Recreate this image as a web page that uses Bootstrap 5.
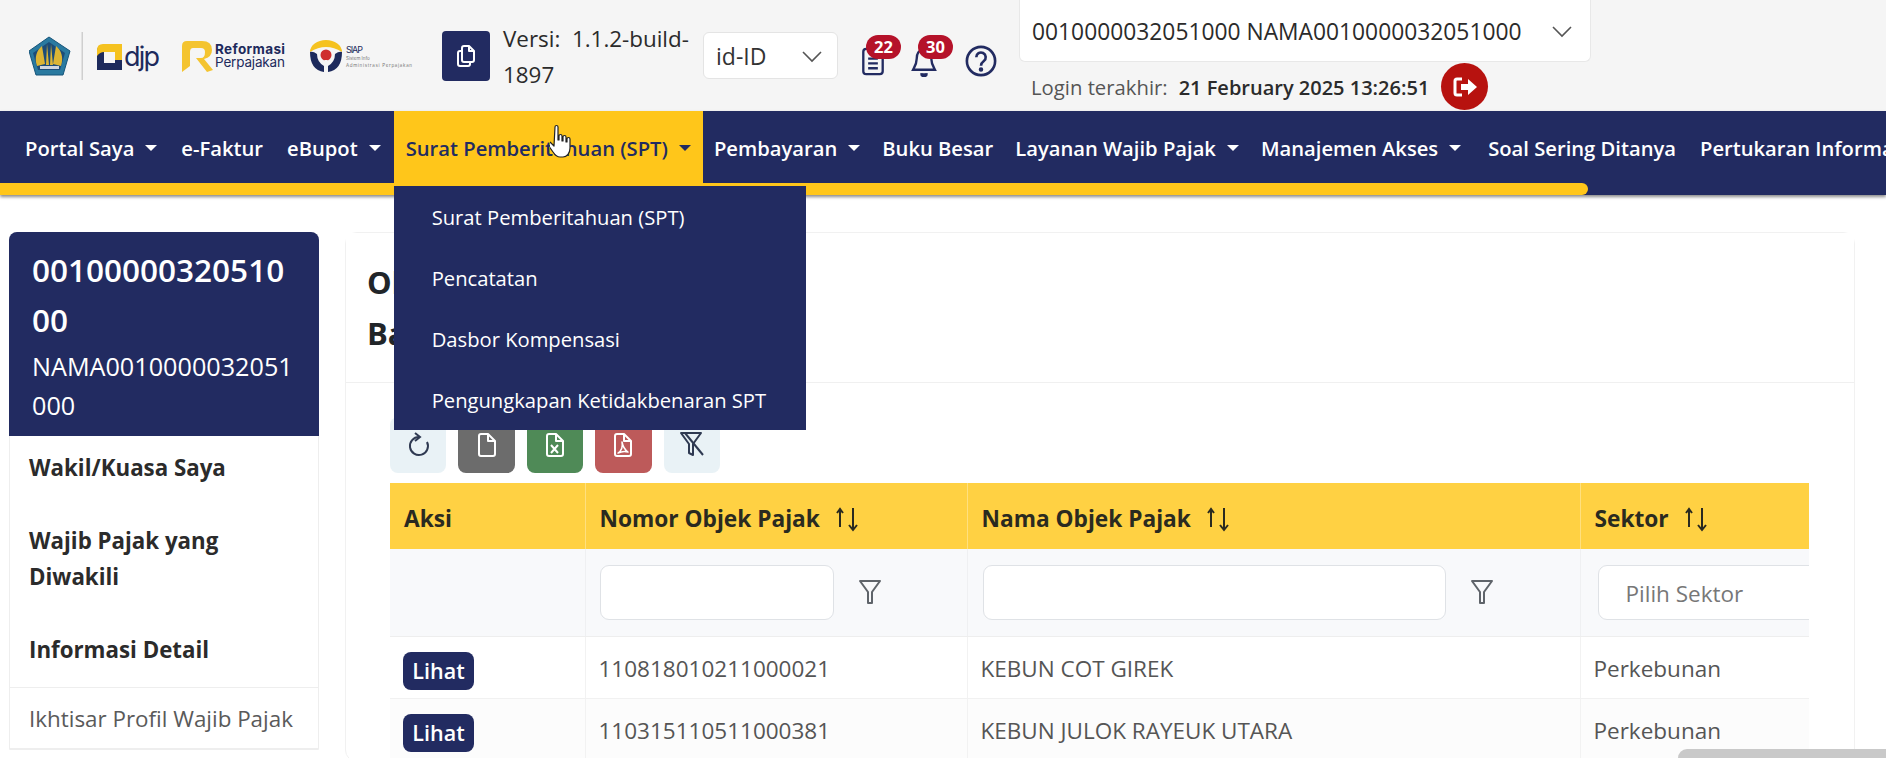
<!DOCTYPE html>
<html lang="id">
<head>
<meta charset="UTF-8" />
<meta name="viewport" content="width=device-width, initial-scale=1" />
<title>Objek Pajak</title>
<link href="https://cdn.jsdelivr.net/npm/bootstrap@5.3.0/dist/css/bootstrap.min.css" rel="stylesheet" />
<style>
html, body { height: 758px; overflow: hidden; }
body { font-family: "Open Sans", "Noto Sans", sans-serif; background: #fff; color: #212529; position: relative; }

/* top header */
.top-head { height: 111px; background: #f5f5f5; padding-left: 29px; }
.logo-strip { width: 413px; height: 111px; }
.logo-text { font-family: "Inter", "Liberation Sans", sans-serif; }
.copy-btn { width: 48px; height: 50px; background: #222b61; border-radius: 4px; margin-top: 31px; }
.versi-text { width: 197px; margin: 21px 0 0 13px; font-size: 22.4px; line-height: 36px; color: #2b2b2b; }
.lang-select { width: 135px; height: 47px; margin: 32px 0 0 3px; background: #fff; border: 1px solid #e4e4e4; border-radius: 6px; padding: 2px 14px 0 12px; font-size: 23px; color: #333; }
.icon-group { width: 181px; height: 111px; }
.ico-badge { position: absolute; height: 24px; border-radius: 12px; background: #b5122a; color: #fff; font-size: 16.5px; font-weight: 700; line-height: 24px; text-align: center; width: 35px; }
.acct-col { width: 572px; }
.acct-select { height: 62px; background: #fff; border: 1px solid #e8e8e8; border-top: 0; border-radius: 0 0 6px 6px; padding: 3px 17px 0 12px; font-size: 22.8px; color: #2b2b2b; }
.login-line { height: 48px; padding-left: 12px; font-size: 20.3px; color: #555; white-space: nowrap; }
.login-line span, .login-line b { padding-top: 3px; }
.login-line b { font-weight: 600; font-size: 20px; color: #2b2b2b; margin-left: 11px; }
.logout-btn { width: 47px; height: 47px; border-radius: 50%; background: #b7120f; margin: 1px 0 0 12px; position: relative; z-index: 3; }

/* main nav */
.main-nav { height: 84px; background: #222b61; box-shadow: 0 2px 3px #8a8a8a; position: relative; z-index: 2; }
.nav-row { height: 72px; padding-left: 13px; white-space: nowrap; overflow: visible; }
.menu-link { display: flex; align-items: center; height: 72px; padding: 2px 12px 0; color: #fff; font-size: 20.2px; font-weight: 600; text-decoration: none; }
.menu-tight { padding-left: 11px; padding-right: 11px; }
.menu-link.dropdown-toggle::after { border-top: 6px solid; border-left: 6px solid transparent; border-right: 6px solid transparent; border-bottom: 0; margin-left: 11px; }
.menu-slot { margin-left: 1px; }
.menu-soal { margin-left: 4px; }
.menu-link.menu-on { background: #ffc61a; color: #222b61; height: 75px; padding-bottom: 3px; align-self: flex-start; }
.scroll-ind { height: 12px; width: 1588px; background: #ffc61a; border-radius: 0 6px 6px 0; }
.spt-menu.dropdown-menu { position: absolute; top: 75px; left: 0; margin: 0; width: 412px; padding: 0; background: #222b61; border: 0; border-radius: 0; }
.spt-menu .dropdown-item { height: 61px; display: flex; align-items: center; padding: 2px 0 0 38px; color: #fff; font-size: 20.2px; }
.hand-cursor { position: absolute; left: 550px; top: 124px; z-index: 5; }

/* sidebar */
.page-body { padding-top: 37px; }
.side-col { width: 310px; margin-left: 9px; flex: none; }
.side-card { border: 1px solid #eee; border-radius: 8px 8px 0 0; }
.side-head { height: 204px; background: #222b61; color: #fff; padding: 13px 20px 0 23px; border-radius: 8px 8px 0 0; margin: -1px -1px 0; word-break: break-all; }
.side-npwp { font-size: 31.5px; font-weight: 600; line-height: 50px; }
.side-name { font-size: 25.2px; line-height: 39px; margin-top: 2px; }
.side-group { font-size: 22.3px; font-weight: 700; color: #2b2b2b; padding: 0 19px; line-height: 36px; }
.side-first { padding-top: 14px; }
.side-next { margin-top: 37px; }
.side-lastgroup { margin-bottom: 19px; }
.side-link { height: 62px; display: flex; align-items: center; padding: 1px 19px 0; font-size: 22.4px; color: #5a5a5a; border-top: 1px solid #eee; border-bottom: 1px solid #eee; }

/* main card */
.main-col { width: 1510px; margin-left: 26px; flex: none; }
.main-card { border: 1px solid #f1f1f1; border-radius: 12px; }
.main-head { height: 150px; padding: 24px 0 0 21px; background: #fff; border-bottom: 1px solid #f0f0f0; }
.main-head h1 { font-size: 31px; font-weight: 700; line-height: 51px; margin: 0; white-space: nowrap; }
.main-body { padding: 34px 0 0 44px; }
.tool-row { gap: 12px; }
.tool-btn { width: 56.4px; height: 56px; border: 0; border-radius: 8px; padding: 0; display: flex; align-items: center; justify-content: center; }
.tool-light { background: #e9f2f6; color: #2f3a52; }
.tool-grey { background: #6c6c6c; color: #fff; }
.tool-green { background: #4f8a57; color: #fff; }
.tool-red { background: #bd5a5a; color: #fff; }
.grid-wrap { width: 1419px; overflow: hidden; margin-top: 10px; }
.obj-table { table-layout: fixed; width: 1590px; margin: 0; border-collapse: collapse; }
.obj-table th { height: 66px; background: #ffd143; font-size: 22.7px; font-weight: 700; color: #2a2a20; padding: 6px 14px 0; vertical-align: middle; border: 0; border-right: 1px solid #ffe07f; white-space: nowrap; }
.obj-table th svg { margin-left: 9px; vertical-align: -5px; }
.filter-row td { height: 87px; background: #f8f9fb; padding: 0 14px; vertical-align: middle; border: 0; border-right: 1px solid #eff0f2; border-bottom: 1px solid #eeeeee; }
.filter-box { height: 55px; background: #fff; border: 1px solid #dfe2e6; border-radius: 9px; }
.filter-nama { margin-left: 1px; }
.filter-ph { height: 55px; width: 260px; background: #fff; border: 1px solid #dfe2e6; border-radius: 9px; color: #777; font-size: 22.5px; padding: 3px 0 0 27px; display: flex; align-items: center; margin-left: 3px; }
.obj-table td.data-cell { height: 62px; padding: 4px 13px 0; font-size: 22.5px; color: #555; vertical-align: middle; border: 0; border-right: 1px solid #f2f2f2; border-bottom: 1px solid #f1f1f1; white-space: nowrap; background: #fff; }
.obj-table tr.row-alt td.data-cell { background: #fcfcfc; }
.lihat-btn { width: 71px; height: 38px; padding: 0; margin-top: 4px; background: #222b61; color: #fff; border: 0; border-radius: 8px; font-size: 21.5px; font-weight: 600; line-height: 38px; }
.video-corner { position: absolute; right: 0; bottom: 0; width: 208px; height: 9px; background: #c9c9c9; border-radius: 12px 0 0 0; z-index: 6; }
</style>
</head>
<body>

<!-- header -->
<div class="top-head d-flex">
    <div class="logo-strip flex-none">
        <svg width="413" height="111" viewBox="0 0 413 111">
            <!-- kemenkeu -->
            <path d="M20 37 L41 51 L34 75 L7 75 L0 51 Z" fill="#2a7aa0" stroke="#16557a"/>
            <path d="M20 42 L36 53 L31 70 L9 70 L4 53 Z" fill="#1c4c78"/>
            <path d="M8 66 C5 57 8 50 13 46 L16 64 Z M32 66 C35 57 32 50 27 46 L24 64 Z M17 65 L18 44 L20 65 Z M21 65 L22 44 L24 65 Z" fill="#dcb534"/>
            <rect x="11" y="66" width="19" height="3" fill="#cfd6de"/>
            <rect x="52.500" y="32" width="1.500" height="48" fill="#cfcfcf"/>
            <!-- djp -->
            <path d="M74 45 H93 V70 H68 V52 Q68 45 74 45 Z M75 52 V63 H86 V52 Z" fill="#1d2a5c"/>
            <path d="M74 44 H93 V60 H86 V52 H75 Q71 52 68 56 V50 Q68 44 74 44 Z" fill="#f5c220"/>
            <text class="logo-text" x="95" y="66" font-size="27" fill="#1d2a5c" textLength="36">djp</text>
            <!-- reformasi -->
            <path d="M153 72 L153 46 Q153 41 158 41 H173 Q183 41 183 50 Q183 57 175 59 L184 70 L178 72 L167 58 H172 Q176 58 176 52 Q176 48 172 48 H164 Q161 48 161 52 V66 Z" fill="#f4c430"/>
            <text class="logo-text" x="186" y="54" font-size="13.500" font-weight="700" fill="#1d2a5c" textLength="70">Reformasi</text>
            <text class="logo-text" x="186" y="67" font-size="13.500" fill="#1d2a5c" textLength="70">Perpajakan</text>
            <!-- siap -->
            <path d="M281 52 A16 12 0 0 1 313 52 Q297 42 281 52 Z" fill="#f5c220"/>
            <path d="M281 52 Q281 70 295 72 V66 Q288 62 288 54 Q284 51 281 52 Z M313 52 Q313 70 299 72 V66 Q306 62 306 54 Q310 51 313 52 Z" fill="#1d2a5c"/>
            <circle cx="297" cy="55" r="5.500" fill="#cf2e2e"/>
            <rect x="295.500" y="60" width="3" height="10" fill="#f5f5f5"/>
            <text class="logo-text" x="317" y="53" font-size="9" fill="#1d2a5c" textLength="17">SIAP</text>
            <text class="logo-text" x="317" y="60" font-size="4.500" fill="#777">Sistem Info</text>
            <text class="logo-text" x="317" y="67" font-size="4.500" fill="#777" textLength="66">Administrasi Perpajakan</text>
        </svg>
    </div>
    <div class="copy-btn d-flex align-items-center justify-content-center flex-none">
        <svg width="20" height="24" viewBox="0 0 20 24" fill="none" stroke="#fff" stroke-width="2" stroke-linejoin="round"><path d="M8 2h5l5 5v9a2 2 0 0 1-2 2H8a2 2 0 0 1-2-2V4a2 2 0 0 1 2-2z"/><path d="M13 2v5h5"/><path d="M6 7H4a2 2 0 0 0-2 2v11a2 2 0 0 0 2 2h8a2 2 0 0 0 2-2v-2"/></svg>
    </div>
    <div class="versi-text flex-none">Versi:&nbsp; 1.1.2-build-<br>1897</div>
    <div class="lang-select d-flex align-items-center justify-content-between flex-none">
        <span>id-ID</span>
        <svg width="22" height="12" viewBox="0 0 22 12" fill="none" stroke="#555" stroke-width="1.600"><path d="M2 1l9 9 9-9"/></svg>
    </div>
    <div class="icon-group position-relative flex-none">
        <svg class="position-absolute" style="left:23px;top:44px" width="24" height="32" viewBox="0 0 24 33" fill="none" stroke="#222b61" stroke-width="2.400"><rect x="2" y="5" width="20" height="26" rx="3"/><path d="M7 15h10M7 20h10M7 25h10"/></svg>
        <span class="ico-badge" style="left:28px;top:35px">22</span>
        <svg class="position-absolute" style="left:73px;top:46px" width="26" height="31" viewBox="0 0 28 34" fill="none" stroke="#222b61" stroke-width="2.600"><path d="M14 4c-6 0-8 5-8 10 0 6-3 10-4 12h24c-1-2-4-6-4-12 0-5-2-10-8-10z"/><path d="M11 30a3 3 0 0 0 6 0" fill="#222b61"/></svg>
        <span class="ico-badge" style="left:80px;top:35px">30</span>
        <svg class="position-absolute" style="left:127px;top:45px" width="32" height="32" viewBox="0 0 34 34" fill="none" stroke="#222b61" stroke-width="2.800"><circle cx="17" cy="17" r="15"/><path d="M12 13a5 5 0 1 1 8 4c-2 1.500-3 2.500-3 5"/><circle cx="17" cy="26" r="1" fill="#222b61"/></svg>
    </div>
    <div class="acct-col flex-none">
        <div class="acct-select d-flex align-items-center justify-content-between">
            <span>0010000032051000 NAMA0010000032051000</span>
            <svg width="22" height="12" viewBox="0 0 22 12" fill="none" stroke="#555" stroke-width="1.600"><path d="M2 1l9 9 9-9"/></svg>
        </div>
        <div class="login-line d-flex align-items-center">
            <span>Login terakhir:</span><b>21 February 2025 13:26:51</b>
            <div class="logout-btn d-flex align-items-center justify-content-center">
                <svg width="26" height="22" viewBox="0 0 26 22"><path d="M10 3H5a2 2 0 0 0-2 2v12a2 2 0 0 0 2 2h5" fill="none" stroke="#fff" stroke-width="3"/><path d="M9 8h7V3l9 8-9 8v-5H9z" fill="#fff"/></svg>
            </div>
        </div>
    </div>
</div>

<!-- nav -->
<nav class="main-nav">
    <div class="nav-row d-flex">
        <a class="menu-link dropdown-toggle" href="#">Portal Saya</a>
        <a class="menu-link" href="#">e-Faktur</a>
        <a class="menu-link dropdown-toggle" href="#">eBupot</a>
        <div class="position-relative menu-slot">
            <a class="menu-link menu-on dropdown-toggle" href="#">Surat Pemberitahuan (SPT)</a>
            <div class="dropdown-menu show spt-menu">
                <a class="dropdown-item" href="#">Surat Pemberitahuan (SPT)</a>
                <a class="dropdown-item" href="#">Pencatatan</a>
                <a class="dropdown-item" href="#">Dasbor Kompensasi</a>
                <a class="dropdown-item" href="#">Pengungkapan Ketidakbenaran SPT</a>
            </div>
        </div>
        <a class="menu-link menu-tight dropdown-toggle" href="#">Pembayaran</a>
        <a class="menu-link menu-tight" href="#">Buku Besar</a>
        <a class="menu-link menu-tight dropdown-toggle" href="#">Layanan Wajib Pajak</a>
        <a class="menu-link menu-tight dropdown-toggle" href="#">Manajemen Akses</a>
        <a class="menu-link menu-soal" href="#">Soal Sering Ditanya</a>
        <a class="menu-link" href="#">Pertukaran Informasi</a>
    </div>
    <div class="scroll-ind"></div>
</nav>

<!-- body -->
<div class="page-body d-flex">
    <div class="side-col">
        <div class="card side-card">
            <div class="side-head">
                <div class="side-npwp">0010000032051000</div>
                <div class="side-name">NAMA0010000032051000</div>
            </div>
            <div class="side-group side-first">Wakil/Kuasa Saya</div>
            <div class="side-group side-next">Wajib Pajak yang Diwakili</div>
            <div class="side-group side-next side-lastgroup">Informasi Detail</div>
            <div class="side-link">Ikhtisar Profil Wajib Pajak</div>
        </div>
    </div>

    <div class="main-col">
        <div class="card main-card">
            <div class="main-head">
                <h1>Objek Pajak Bumi dan<br>Bangunan</h1>
            </div>
            <div class="main-body">
                <div class="d-flex tool-row">
                    <button class="tool-btn tool-light" type="button">
                        <svg width="24" height="26" viewBox="0 0 24 26" fill="none" stroke="currentColor" stroke-width="2"><path d="M13 5a9 9 0 1 0 8 5"/><path d="M9 1l5 4-5 4"/></svg>
                    </button>
                    <button class="tool-btn tool-grey" type="button">
                        <svg width="20" height="26" viewBox="0 0 20 26" fill="none" stroke="currentColor" stroke-width="2" stroke-linejoin="round"><path d="M4 2h7l7 7v13a2 2 0 0 1-2 2H4a2 2 0 0 1-2-2V4a2 2 0 0 1 2-2z"/><path d="M11 2v7h7"/></svg>
                    </button>
                    <button class="tool-btn tool-green" type="button">
                        <svg width="20" height="26" viewBox="0 0 20 26" fill="none" stroke="currentColor" stroke-width="2" stroke-linejoin="round"><path d="M4 2h7l7 7v13a2 2 0 0 1-2 2H4a2 2 0 0 1-2-2V4a2 2 0 0 1 2-2z"/><path d="M11 2v7h7"/><path d="M6 13l7 8M13 13l-7 8"/></svg>
                    </button>
                    <button class="tool-btn tool-red" type="button">
                        <svg width="20" height="26" viewBox="0 0 20 26" fill="none" stroke="currentColor" stroke-width="2" stroke-linejoin="round"><path d="M4 2h7l7 7v13a2 2 0 0 1-2 2H4a2 2 0 0 1-2-2V4a2 2 0 0 1 2-2z"/><path d="M11 2v7h7"/><path d="M9 10c1 5-1 9-4 11 4-2 7-2 10-1-3-2-5-5-6-10z" stroke-width="1.500"/></svg>
                    </button>
                    <button class="tool-btn tool-light" type="button">
                        <svg width="26" height="28" viewBox="0 0 26 28" fill="none" stroke="currentColor" stroke-width="2" stroke-linejoin="round"><path d="M2 2h20l-8 11v11l-4-2v-9z"/><path d="M6 2l18 22"/></svg>
                    </button>
                </div>

                <div class="grid-wrap">
                    <table class="table obj-table">
                        <colgroup>
                            <col style="width:195px">
                            <col style="width:382px">
                            <col style="width:613px">
                            <col style="width:400px">
                        </colgroup>
                        <thead>
                            <tr>
                                <th>Aksi</th>
                                <th>Nomor Objek Pajak <svg width="24" height="26" viewBox="0 0 24 26" fill="none" stroke="#2a2a20" stroke-width="2"><path d="M5 21V3M2 7l3-4 3 4"/><path d="M18 2v22M14 19l4 5 4-5"/></svg></th>
                                <th>Nama Objek Pajak <svg width="24" height="26" viewBox="0 0 24 26" fill="none" stroke="#2a2a20" stroke-width="2"><path d="M5 21V3M2 7l3-4 3 4"/><path d="M18 2v22M14 19l4 5 4-5"/></svg></th>
                                <th>Sektor <svg width="24" height="26" viewBox="0 0 24 26" fill="none" stroke="#2a2a20" stroke-width="2"><path d="M5 21V3M2 7l3-4 3 4"/><path d="M18 2v22M14 19l4 5 4-5"/></svg></th>
                            </tr>
                        </thead>
                        <tbody>
                            <tr class="filter-row">
                                <td></td>
                                <td>
                                    <div class="d-flex align-items-center">
                                        <div class="filter-box" style="width:234px"></div>
                                        <svg class="ms-4" width="24" height="26" viewBox="0 0 24 26" fill="none" stroke="#5f646a" stroke-width="2" stroke-linejoin="round"><path d="M2 2h20l-8 11v11h-4V13z"/></svg>
                                    </div>
                                </td>
                                <td>
                                    <div class="d-flex align-items-center">
                                        <div class="filter-box filter-nama" style="width:463px"></div>
                                        <svg class="ms-4" width="24" height="26" viewBox="0 0 24 26" fill="none" stroke="#5f646a" stroke-width="2" stroke-linejoin="round"><path d="M2 2h20l-8 11v11h-4V13z"/></svg>
                                    </div>
                                </td>
                                <td><div class="filter-ph">Pilih Sektor</div></td>
                            </tr>
                            <tr>
                                <td class="data-cell"><button class="lihat-btn" type="button">Lihat</button></td>
                                <td class="data-cell">110818010211000021</td>
                                <td class="data-cell">KEBUN COT GIREK</td>
                                <td class="data-cell">Perkebunan</td>
                            </tr>
                            <tr class="row-alt">
                                <td class="data-cell"><button class="lihat-btn" type="button">Lihat</button></td>
                                <td class="data-cell">110315110511000381</td>
                                <td class="data-cell">KEBUN JULOK RAYEUK UTARA</td>
                                <td class="data-cell">Perkebunan</td>
                            </tr>
                        </tbody>
                    </table>
                </div>
            </div>
        </div>
    </div>
</div>

<svg class="hand-cursor" width="26" height="36" viewBox="0 0 26 36"><path d="M5 3c0-2 3-2 3 0v13l1 0V12c0-2 3-2 3 0v5h1v-4c0-2 3-2 3 0v5h1v-3c0-2 3-2 3 0v9c0 5-3 9-7 9h-3c-3 0-5-2-7-5l-5-7c-1-2 1-4 3-2l3 3z" fill="#fff" stroke="#222" stroke-width="1.200" stroke-linejoin="round"/></svg>
<div class="video-corner"></div>

<script src="https://cdn.jsdelivr.net/npm/bootstrap@5.3.0/dist/js/bootstrap.bundle.min.js"></script>
</body>
</html>
